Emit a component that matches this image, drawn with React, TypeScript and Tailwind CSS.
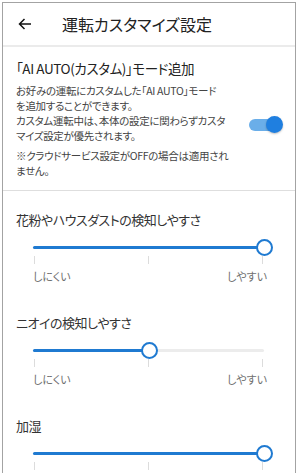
import React from "react";

const font = {
  fontFamily: '"Noto Sans CJK JP", "Noto Sans", sans-serif',
};

const Toggle = () => (
  <div className="relative w-[34px] h-[18px] shrink-0 flex items-center">
    <div className="absolute left-0 right-[4px] h-[12px] rounded-full bg-[#6aaee9]" />
    <div className="absolute right-0 w-[17px] h-[17px] rounded-full bg-[#1f7fe0] shadow-[0_1px_2px_rgba(0,0,0,0.25)]" />
  </div>
);

const Slider = ({ label, value }: { label: string; value: number }) => (
  <div className="h-[103px] pt-[19px]">
    <div className="pl-[13px] text-[13px] tracking-[-0.5px] leading-[20px] text-[#333]">{label}</div>
    <div className="ml-[30px] mr-[31px] mt-[10px]">
      <div className="relative h-[16px] flex items-center">
        <div className="w-full h-[3px] bg-[#ececec] rounded-full" />
        <div
          className="absolute left-0 h-[3px] bg-[#1f7ad1] rounded-full"
          style={{ width: `${value}%` }}
        />
        <div
          className="absolute w-[17px] h-[17px] -ml-[8px] rounded-full bg-white border-2 border-[#1f7ad1]"
          style={{ left: `${value}%` }}
        />
      </div>
      <div className="flex justify-between px-[1px]">
        <div className="w-px h-[8px] bg-[#dcdcdc]" />
        <div className="w-px h-[8px] bg-[#dcdcdc]" />
        <div className="w-px h-[8px] bg-[#dcdcdc]" />
      </div>
      <div className="flex justify-between -mr-[3px] mt-[3px] text-[11px] leading-[18px] text-[#707070]">
        <span>しにくい</span>
        <span>しやすい</span>
      </div>
    </div>
  </div>
);

export default function App() {
  return (
    <div
      className="w-[298px] h-[473px] overflow-hidden bg-white pt-[2px] px-[2px] [font-feature-settings:'palt']"
      style={font}
    >
      <div className="h-full border border-b-0 border-[#a3a3a3] bg-white">
        <div className="h-[44px] flex items-center border-b-2 border-[#ebebeb] text-[#222]">
          <svg width="14" height="12" viewBox="0 0 14 12" className="ml-[15px]">
            <path d="M13 6H1.5M6.5 1L1.5 6l5 5" fill="none" stroke="#111" strokeWidth="1.5" />
          </svg>
          <div className="ml-[30px] text-[16px] leading-[22px]">運転カスタマイズ設定</div>
        </div>

        <div className="px-[13px] pt-[11px] pb-[12px] border-b border-[#dedede]">
          <div className="text-[13.5px] tracking-[-0.4px] leading-[20px] text-[#222]">
            「AI AUTO(カスタム)」モード追加
          </div>
          <div className="flex items-center mt-[4.5px]">
            <div className="whitespace-nowrap text-[10.5px] tracking-[-0.3px] leading-[15px] text-[#444]">
              お好みの運転にカスタムした「AI AUTO」モード
              <br />
              を追加することができます。
              <br />
              カスタム運転中は、本体の設定に関わらずカスタ
              <br />
              マイズ設定が優先されます。
            </div>
            <div className="ml-auto -mr-[1px] mt-[24px]">
              <Toggle />
            </div>
          </div>
          <div className="mt-[5px] whitespace-nowrap text-[10.5px] tracking-[-0.3px] leading-[15px] text-[#444]">
            ※クラウドサービス設定がOFFの場合は適用され
            <br />
            ません。
          </div>
        </div>

        <Slider label="花粉やハウスダストの検知しやすさ" value={100} />
        <Slider label="ニオイの検知しやすさ" value={50} />
        <Slider label="加湿" value={100} />
      </div>
    </div>
  );
}
